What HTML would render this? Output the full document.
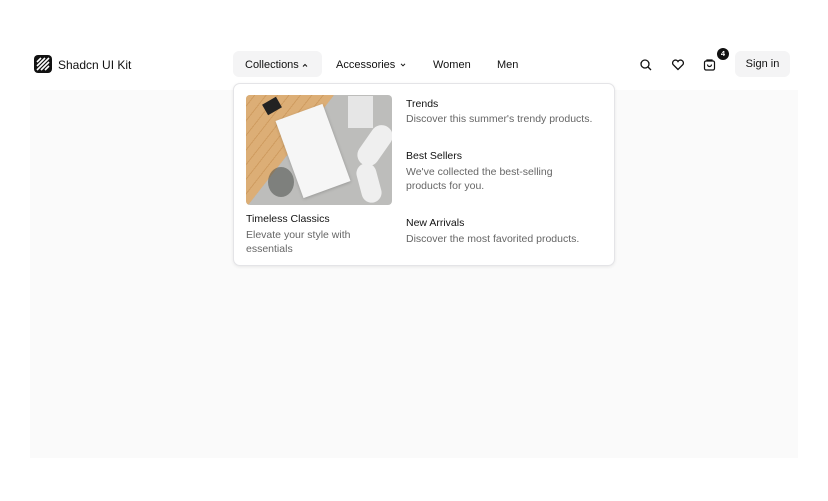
<!DOCTYPE html>
<html><head><style>
*{margin:0;padding:0;box-sizing:border-box}
body{width:828px;height:501px;background:#fff;font-family:"Liberation Sans",sans-serif;position:relative;overflow:hidden;color:#111}
.a{position:absolute}
.nav{font-size:11px;color:#111}
.t{font-size:10.5px;color:#111}
.d{font-size:10.5px;color:#666;line-height:14px}
</style></head><body>
<div class="a" style="left:30px;top:90px;width:768px;height:368px;background:#fafafa"></div>
<svg class="a" style="left:34px;top:55px" width="18" height="18" viewBox="0 0 18 18"><rect width="18" height="18" rx="4" fill="#111"/><path d="M3 7L7 3M3 11L11 3M3 15L15 3M7 15L15 7M11 15L15 11" stroke="#fff" stroke-width="1.6"/></svg>
<div class="a" style="left:58px;top:58px;font-size:12px">Shadcn UI Kit</div>
<div class="a" style="left:233px;top:51px;width:89px;height:26px;background:#f4f4f5;border-radius:6px"></div>
<div class="a nav" style="left:245px;top:59px">Collections</div>
<svg class="a" style="left:302px;top:63px" width="6" height="4" viewBox="0 0 6 4" fill="none" stroke="#111" stroke-width="1"><path d="M1 3.5L3 1.5L5 3.5"/></svg>
<div class="a nav" style="left:336px;top:59px">Accessories</div>
<svg class="a" style="left:400px;top:63px" width="6" height="4" viewBox="0 0 6 4" fill="none" stroke="#111" stroke-width="1"><path d="M1 .8L3 2.8L5 .8"/></svg>
<div class="a nav" style="left:433px;top:59px">Women</div>
<div class="a nav" style="left:497px;top:59px">Men</div>
<svg class="a" style="left:639px;top:58px" width="14" height="14" viewBox="0 0 14 14" fill="none" stroke="#111" stroke-width="1.3"><circle cx="6" cy="6" r="4"/><path d="M9 9l3 3"/></svg>
<svg class="a" style="left:671px;top:58px" width="14" height="13" viewBox="0 0 14 13" fill="none" stroke="#111" stroke-width="1.3"><path d="M7 11.5L2 6.5a2.7 2.7 0 0 1 5-3a2.7 2.7 0 0 1 5 3z"/></svg>
<svg class="a" style="left:703px;top:58px" width="13" height="13" viewBox="0 0 13 13" fill="none" stroke="#111" stroke-width="1.2"><rect x="1.5" y="3" width="10" height="9" rx="1.5"/><path d="M4 3V2h5v1M4.5 6.5a2 2 0 0 0 4 0"/></svg>
<div class="a" style="left:717px;top:48px;width:12px;height:12px;border-radius:6px;background:#111;color:#fff;font-size:7.5px;text-align:center;line-height:12px;font-weight:bold">4</div>
<div class="a" style="left:735px;top:51px;width:55px;height:26px;background:#f4f4f5;border-radius:6px;font-size:11px;text-align:center;line-height:27px">Sign in</div>
<div class="a" style="left:233px;top:83px;width:382px;height:183px;background:#fff;border:1px solid #e4e4e7;border-radius:7px;box-shadow:0 1px 3px rgba(0,0,0,.08)"></div>
<div class="a" style="left:246px;top:95px;width:146px;height:110px;border-radius:4px;overflow:hidden;background:#bdbdbb">
 <div class="a" style="left:-30px;top:-40px;width:80px;height:150px;background:repeating-linear-gradient(90deg,#dcae76 0 8px,#cf9c60 8px 9px);transform:rotate(38deg)"></div>
 <div class="a" style="left:18px;top:5px;width:16px;height:12px;background:#222;transform:rotate(-30deg)"></div>
 <div class="a" style="left:42px;top:15px;width:50px;height:82px;background:#f6f6f6;transform:rotate(-20deg);box-shadow:0 1px 3px rgba(0,0,0,.2)"></div>
 <div class="a" style="left:102px;top:1px;width:25px;height:32px;background:#e6e6e6"></div>
 <div class="a" style="left:118px;top:28px;width:22px;height:45px;background:#efefef;border-radius:11px;transform:rotate(35deg)"></div>
 <div class="a" style="left:113px;top:68px;width:20px;height:40px;background:#efefef;border-radius:10px;transform:rotate(-15deg)"></div>
 <div class="a" style="left:22px;top:72px;width:26px;height:30px;background:#4a4f4a;border-radius:50%;opacity:.55"></div>
</div>
<div class="a t" style="left:246px;top:213px">Timeless Classics</div>
<div class="a d" style="left:246px;top:228px;width:130px">Elevate your style with essentials</div>
<div class="a t" style="left:406px;top:98px">Trends</div>
<div class="a d" style="left:406px;top:112px">Discover this summer's trendy products.</div>
<div class="a t" style="left:406px;top:150px">Best Sellers</div>
<div class="a d" style="left:406px;top:165px;width:170px">We've collected the best-selling products for you.</div>
<div class="a t" style="left:406px;top:217px">New Arrivals</div>
<div class="a d" style="left:406px;top:232px">Discover the most favorited products.</div>
</body></html>
